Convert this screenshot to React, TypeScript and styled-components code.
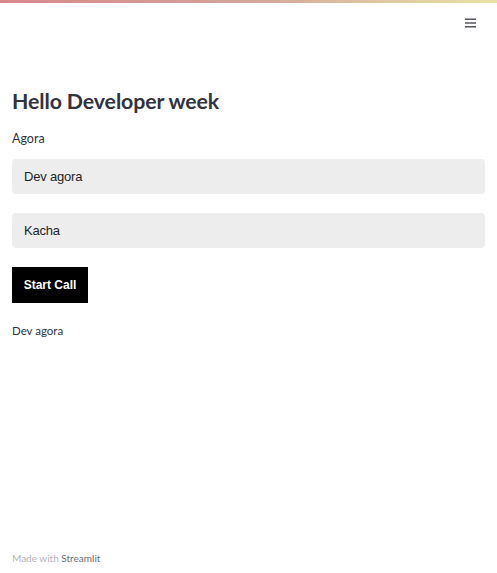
import React from "react";
import styled, { createGlobalStyle } from "styled-components";

const Global = createGlobalStyle`
  html, body { margin: 0; padding: 0; background: #ffffff; }
  body { font-family: Lato, "Noto Sans", sans-serif; color: #31333f; }
  * { box-sizing: border-box; }
`;

const Page = styled.div`
  display: flex;
  flex-direction: column;
  height: 573px;
  width: 100%;
`;

const TopBar = styled.div`
  height: 3px;
  background: linear-gradient(90deg, #d9868c 0%, #d3a59a 50%, #e9e3a6 100%);
`;

const Header = styled.header`
  display: flex;
  justify-content: flex-end;
  padding: 13px 20px 0 0;
  height: 45px;
`;

const MenuButton = styled.button`
  border: none;
  background: transparent;
  padding: 0;
  width: 14px;
  height: 14px;
  display: flex;
  align-items: center;
  justify-content: center;
  color: #4a4b55;
`;

const Main = styled.main`
  flex: 1;
  display: flex;
  flex-direction: column;
  padding: 40px 12px 0 12px;
`;

const Title = styled.h1`
  margin: 0;
  font-family: Lato, "Noto Sans", sans-serif;
  font-weight: 700;
  font-size: 21.3px;
  line-height: 27px;
  color: #31333f;
  letter-spacing: -0.1px;
`;

const Label = styled.div`
  margin-top: 15px;
  font-size: 12.5px;
  line-height: 18px;
  color: #31333f;
`;

const Field = styled.div<{ $gap: number }>`
  margin-top: ${(p) => p.$gap}px;
  height: 35px;
  background: #ededed;
  border-radius: 4px;
  display: flex;
  align-items: center;
  padding-left: 12px;
  font-family: "Liberation Sans", Arial, sans-serif;
  font-size: 13px;
  letter-spacing: -0.2px;
  color: #1f1f24;
`;

const StartButton = styled.button`
  margin-top: 19px;
  align-self: flex-start;
  width: 76px;
  height: 36px;
  border: none;
  background: #000000;
  color: #ffffff;
  font-family: "Liberation Sans", Arial, sans-serif;
  font-weight: 700;
  font-size: 12px;
  padding: 0;
`;

const Output = styled.div`
  margin-top: 20px;
  font-size: 11.5px;
  line-height: 16px;
  color: #31333f;
`;

const Footer = styled.footer`
  padding: 0 12px 8px;
  font-size: 10px;
  line-height: 14px;
  color: #b4b4b8;
`;

const Brand = styled.span`
  color: #6d6d74;
`;

export default function App() {
  return (
    <>
      <Global />
      <Page>
        <TopBar />
        <Header>
          <MenuButton aria-label="menu">
            <svg width="11" height="10" viewBox="0 0 11 10">
              <rect x="0" y="0.5" width="11" height="1.4" fill="currentColor" />
              <rect x="0" y="4.3" width="11" height="1.4" fill="currentColor" />
              <rect x="0" y="8.1" width="11" height="1.4" fill="currentColor" />
            </svg>
          </MenuButton>
        </Header>
        <Main>
          <Title>Hello Developer week</Title>
          <Label>Agora</Label>
          <Field $gap={11}>Dev agora</Field>
          <Field $gap={19}>Kacha</Field>
          <StartButton>Start Call</StartButton>
          <Output>Dev agora</Output>
        </Main>
        <Footer>
          Made with <Brand>Streamlit</Brand>
        </Footer>
      </Page>
    </>
  );
}
